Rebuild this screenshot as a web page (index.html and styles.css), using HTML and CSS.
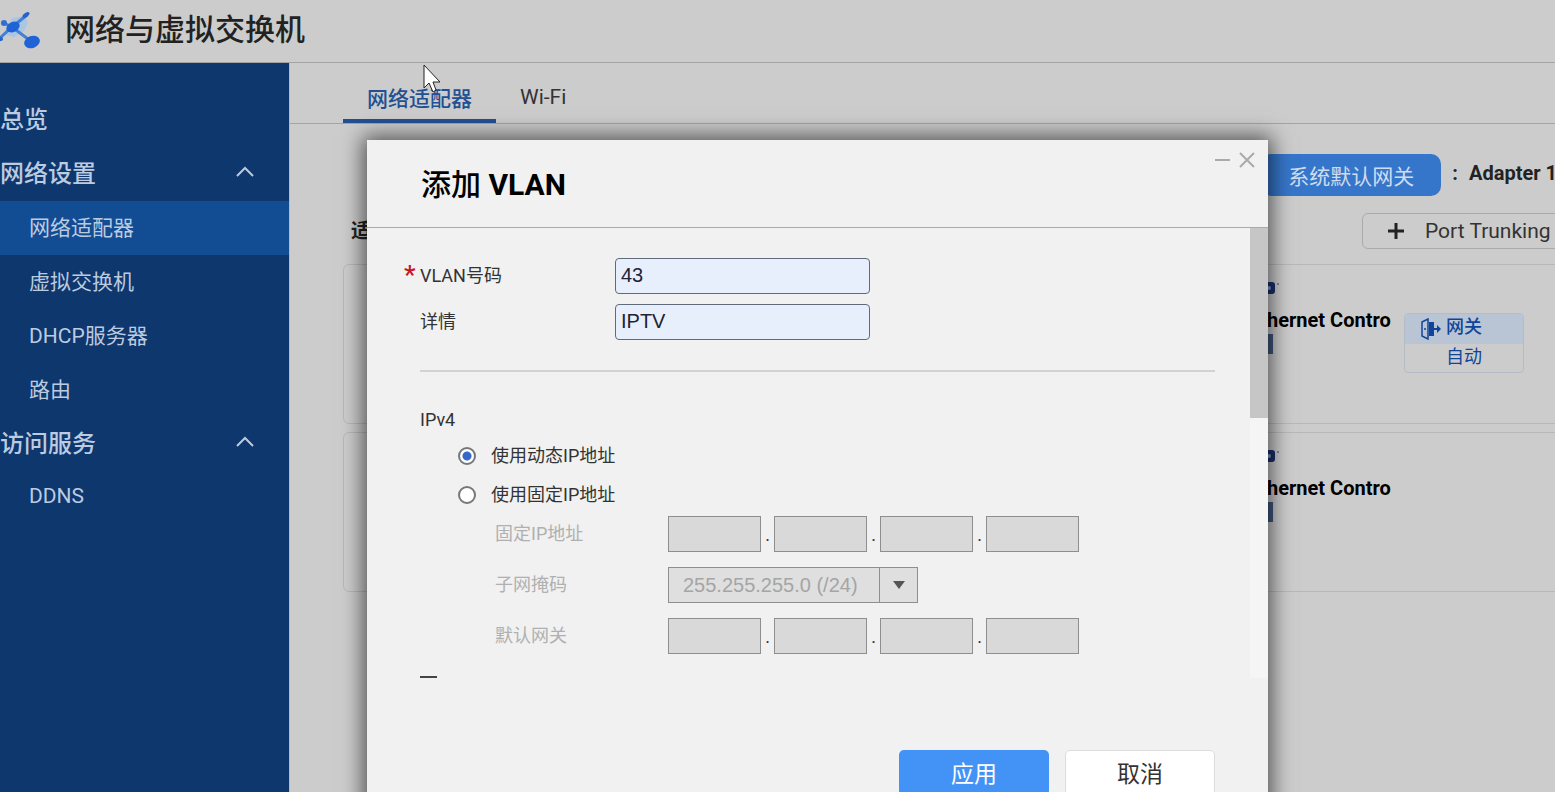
FILE: index.html
```html
<!DOCTYPE html>
<html lang="zh-CN">
  <head>
    <title>网络与虚拟交换机</title>
    <meta charset="UTF-8">
    <meta name="viewport" content="width=device-width, initial-scale=1.0">
    <link rel="stylesheet" href="styles.css">
  </head>
  <body>
    <header class="topbar">
      <svg class="logo" width="42" height="38" viewBox="0 0 42 38">
        <path d="M5 20 L12 7 L25 5 L28 12 L24 20 L14 26 L6 24 Z" fill="#a9c6e2"/>
        <path d="M0 27 L12 16 L27 4 M12 16 L32 31 M12 16 L4 12" fill="none" stroke="#4480d4" stroke-width="3"/>
        <ellipse cx="13" cy="16" rx="7" ry="5" transform="rotate(-25 13 16)" fill="#1f63d6"/>
        <ellipse cx="4" cy="12" rx="3" ry="3" fill="#2f6ed3"/>
        <ellipse cx="26" cy="4" rx="4" ry="2" transform="rotate(-35 26 4)" fill="#2a62c8"/>
        <ellipse cx="32" cy="31" rx="8" ry="6" transform="rotate(-20 32 31)" fill="#1f63d6"/>
        <ellipse cx="0" cy="28" rx="3" ry="2" fill="#1f63d6"/>
      </svg>
      <h1>网络与虚拟交换机</h1>
    </header>

    <div class="layout">
      <nav class="sidebar">
        <a class="group" href="#">总览</a>
        <a class="group" href="#">网络设置
          <svg width="20" height="14" viewBox="0 0 20 14"><path d="M2 12 L10 4 L18 12" fill="none" stroke="#bccbe0" stroke-width="2"/></svg>
        </a>
        <a class="item active" href="#">网络适配器</a>
        <a class="item" href="#">虚拟交换机</a>
        <a class="item" href="#">DHCP服务器</a>
        <a class="item" href="#">路由</a>
        <a class="group" href="#">访问服务
          <svg width="20" height="14" viewBox="0 0 20 14"><path d="M2 12 L10 4 L18 12" fill="none" stroke="#bccbe0" stroke-width="2"/></svg>
        </a>
        <a class="item" href="#">DDNS</a>
      </nav>

      <main>
        <div class="tabs">
          <a class="tab active" href="#">网络适配器</a>
          <a class="tab" href="#">Wi-Fi</a>
        </div>
        <div class="content">
          <div class="gateway-row">
            <button class="gateway-btn" type="button">系统默认网关</button>
            <b>:</b>
            <b>Adapter 1</b>
          </div>
          <div class="title-row">
            <h2>适配器</h2>
            <button class="trunk-btn" type="button">
              <svg width="16" height="16" viewBox="0 0 16 16"><path d="M8 0 V16 M0 8 H16" stroke="#222" stroke-width="3"/></svg>
              Port Trunking
            </button>
          </div>

          <section class="card">
            <div class="adapter">
              <svg width="32" height="14" viewBox="0 0 32 14">
                <rect x="4" y="1" width="22" height="12" rx="3" fill="#1b2f70"/>
                <circle cx="20" cy="7" r="2" fill="#8f9dc0"/>
                <circle cx="29" cy="3" r="1" fill="#69779c"/>
              </svg>
              <h3>Ethernet Contro</h3>
              <span class="port"></span>
            </div>
            <div class="gateway-box">
              <div class="gateway-head">
                <svg width="22" height="22" viewBox="0 0 22 22">
                  <path d="M2 4 L8 1 V21 L2 18 Z" fill="none" stroke="#10459a" stroke-width="1.5"/>
                  <circle cx="5" cy="11" r="1" fill="#10459a"/>
                  <path d="M9 4 H14 V18 H9 Z" fill="#10459a"/>
                  <path d="M14 11 H18" fill="none" stroke="#10459a" stroke-width="2"/>
                  <path d="M17 7 L21 11 L17 15 Z" fill="#10459a"/>
                </svg>
                <span>网关</span>
              </div>
              <div class="gateway-mode">自动</div>
            </div>
          </section>

          <section class="card">
            <div class="adapter">
              <svg width="32" height="14" viewBox="0 0 32 14">
                <rect x="4" y="1" width="22" height="12" rx="3" fill="#1b2f70"/>
                <circle cx="20" cy="7" r="2" fill="#8f9dc0"/>
                <circle cx="29" cy="3" r="1" fill="#69779c"/>
              </svg>
              <h3>Ethernet Contro</h3>
              <span class="port"></span>
            </div>
          </section>
        </div>
      </main>
    </div>

    <div class="dialog" role="dialog" aria-labelledby="dialog-title">
      <div class="dialog-head">
        <h2 id="dialog-title">添加 <b>VLAN</b></h2>
        <div class="window-btns">
          <button type="button" aria-label="最小化">
            <svg width="16" height="16" viewBox="0 0 16 16"><path d="M0 8 H15" stroke="#aaa" stroke-width="2"/></svg>
          </button>
          <button type="button" aria-label="关闭">
            <svg width="16" height="16" viewBox="0 0 16 16"><path d="M1 1 L15 15 M15 1 L1 15" stroke="#aaa" stroke-width="2"/></svg>
          </button>
        </div>
      </div>

      <div class="dialog-body">
        <form id="vlan-form">
          <div class="field">
            <label class="required" for="vlan_id">VLAN号码</label>
            <input type="text" id="vlan_id" name="vlan_id" value="43">
          </div>
          <div class="field">
            <label for="desc">详情</label>
            <input type="text" id="desc" name="desc" value="IPTV">
          </div>
          <hr>
          <p class="section">IPv4</p>
          <div class="choice">
            <input type="radio" id="dhcp" name="ip_mode" checked>
            <label for="dhcp">使用动态IP地址</label>
          </div>
          <div class="choice">
            <input type="radio" id="static" name="ip_mode">
            <label for="static">使用固定IP地址</label>
          </div>

          <div class="sub">
            <label for="ip1">固定IP地址</label>
            <div class="octets">
              <input type="text" id="ip1" disabled><span>.</span>
              <input type="text" aria-label="固定IP地址 2" disabled><span>.</span>
              <input type="text" aria-label="固定IP地址 3" disabled><span>.</span>
              <input type="text" aria-label="固定IP地址 4" disabled>
            </div>
          </div>
          <div class="sub">
            <label for="mask">子网掩码</label>
            <div class="select">
              <select id="mask" disabled>
                <option>255.255.255.0 (/24)</option>
              </select>
              <span class="arrow"></span>
            </div>
          </div>
          <div class="sub">
            <label for="gw1">默认网关</label>
            <div class="octets">
              <input type="text" id="gw1" disabled><span>.</span>
              <input type="text" aria-label="默认网关 2" disabled><span>.</span>
              <input type="text" aria-label="默认网关 3" disabled><span>.</span>
              <input type="text" aria-label="默认网关 4" disabled>
            </div>
          </div>
          <input class="more" type="checkbox" aria-label="更多">
        </form>
        <div class="scrollbar"><div class="thumb"></div></div>
      </div>

      <div class="dialog-foot">
        <button class="apply" type="submit" form="vlan-form">应用</button>
        <button class="cancel" type="button">取消</button>
      </div>
    </div>

    <svg class="cursor" width="20" height="30" viewBox="0 0 20 30">
      <path d="M2 2 V25 L7 20 L11 29 L14 27 L11 19 H18 Z" fill="#fff" stroke="#222" stroke-width="1"/>
    </svg>
  </body>
</html>
```

FILE: styles.css
```css
* {
  box-sizing: border-box;
  margin: 0;
  padding: 0;
}

body {
  display: flex;
  flex-direction: column;
  height: 100vh;
  overflow: hidden;
  font-family: Roboto, "Noto Sans CJK SC", sans-serif;
  font-size: 18px;
  color: #333;
  background-color: #ccc;
}

button, input, select {
  font: inherit;
  color: inherit;
}

a {
  color: inherit;
  text-decoration: none;
}

/* Header */
.topbar {
  display: flex;
  flex: none;
  align-items: center;
  gap: 23px;
  height: 63px;
  padding-bottom: 2px;
  border-bottom: 1px solid #a4a4a4;
}

.topbar h1 {
  font-size: 30px;
  font-weight: 500;
  line-height: 60px;
  color: #222;
}

.layout {
  display: flex;
  flex: 1;
  min-height: 0;
}

/* Sidebar */
.sidebar {
  flex: none;
  width: 289px;
  padding-top: 30px;
  color: #bccbe0;
  background-color: #0e376d;
}

.sidebar a {
  display: flex;
  align-items: center;
  justify-content: space-between;
  height: 54px;
  padding-right: 34px;
}

.sidebar .group {
  padding-bottom: 6px;
  font-size: 24px;
  font-weight: 500;
}

.sidebar .item {
  padding-bottom: 4px;
  padding-left: 29px;
  font-size: 21px;
}

.sidebar .active {
  background-color: #124c92;
}

/* Main area */
main {
  flex: 1;
  min-width: 0;
  border-left: 1px solid #bbb;
}

.tabs {
  display: flex;
  height: 61px;
  padding-left: 53px;
  border-bottom: 1px solid #a4a4a4;
}

.tab {
  padding: 6px 24px 0;
  font-size: 21px;
  line-height: 56px;
}

.tab.active {
  padding-top: 8px;
  font-weight: 500;
  color: #234f93;
  border-bottom: 4px solid #234f93;
}

.content {
  padding: 30px 0 0 53px;
}

.gateway-row {
  display: flex;
  align-items: center;
  justify-content: flex-end;
  gap: 11px;
  margin-right: -2px;
  height: 42px;
  font-size: 20px;
  color: #222;
  white-space: nowrap;
}

.gateway-row b {
  padding-bottom: 4px;
}

.gateway-btn {
  width: 180px;
  height: 42px;
  font-size: 21px;
  color: #cfdcee;
  background-color: #3676ca;
  border: none;
  border-radius: 10px;
}

.title-row {
  display: flex;
  align-items: center;
  justify-content: space-between;
  height: 36px;
  margin: 17px -20px 15px 8px;
}

.title-row h2 {
  padding-bottom: 4px;
  font-size: 20px;
  color: #222;
}

.trunk-btn {
  display: flex;
  align-items: center;
  gap: 21px;
  width: 213px;
  height: 36px;
  padding-left: 25px;
  font-size: 21px;
  white-space: nowrap;
  background: none;
  border: 1px solid #aaa;
  border-radius: 6px;
}

.card {
  display: flex;
  justify-content: flex-end;
  height: 160px;
  margin: 0 -20px 8px 0;
  padding-right: 186px;
  border: 1px solid #b8b8b8;
  border-radius: 6px;
}

.adapter {
  width: 139px;
  padding-top: 16px;
}

.adapter svg, .port {
  display: block;
}

.adapter h3 {
  margin: 13px 0 2px;
  font-size: 20px;
  line-height: 24px;
  color: #000;
  white-space: nowrap;
}

.port {
  width: 24px;
  height: 20px;
  background-color: #435a80;
}

/* Gateway box */
.gateway-box {
  width: 120px;
  height: 60px;
  margin: 48px -136px 0 16px;
  line-height: 26px;
  color: #10459a;
  border: 1px solid #b5bcc6;
  border-radius: 4px;
}

.gateway-head {
  display: flex;
  align-items: center;
  gap: 4px;
  height: 30px;
  padding-left: 15px;
  font-weight: 500;
  background-color: #b9c5d5;
}

.gateway-head span {
  padding-bottom: 4px;
}

.gateway-mode {
  text-align: center;
}

/* Dialog */
.dialog {
  position: absolute;
  top: 140px;
  left: 367px;
  right: 287px;
  background-color: #f1f1f1;
  box-shadow: 0 0 20px 4px rgba(0,0,0,0.6);
}

.dialog-head {
  display: flex;
  justify-content: space-between;
  height: 88px;
  padding: 0 13px 0 54px;
  border-bottom: 1px solid #aaa;
}

.dialog-head h2 {
  font-size: 30px;
  font-weight: 500;
  line-height: 90px;
  color: #000;
}

.window-btns {
  display: flex;
  gap: 8px;
  padding-top: 12px;
}

.window-btns button {
  width: 16px;
  height: 16px;
  background: none;
  border: none;
}

.window-btns svg {
  display: block;
}

.dialog-body {
  display: flex;
  height: 450px;
  overflow: hidden;
}

.dialog-body form {
  flex: 1;
  padding: 30px 35px 0 53px;
}

.scrollbar {
  width: 18px;
  background-color: #f5f5f5;
}

.thumb {
  height: 190px;
  background-color: #c6c6c6;
}

.field {
  display: flex;
  height: 36px;
  margin-bottom: 10px;
}

.field label {
  width: 195px;
  line-height: 35px;
}

.required::before {
  content: "*";
  float: left;
  margin-left: -16px;
  font-size: 26px;
  font-weight: 500;
  color: #c8161d;
}

.field input {
  width: 255px;
  padding: 0 5px 2px;
  font-family: "Liberation Sans", sans-serif;
  font-size: 20px;
  color: #223;
  background-color: #e8effc;
  border: 1px solid #5f6b7d;
  border-radius: 4px;
}

hr {
  margin-top: 30px;
  border: none;
  border-top: 2px solid #d2d2d2;
}

.section {
  margin: 34px 0 10px;
  line-height: 28px;
}

.choice {
  display: flex;
  align-items: center;
  gap: 15px;
  height: 24px;
  margin: 0 0 15px 38px;
}

.choice label {
  padding-bottom: 4px;
}

.choice input {
  appearance: none;
  width: 18px;
  height: 18px;
  background-color: #fff;
  border: 2px solid #777;
  border-radius: 50%;
}

.choice input:checked {
  background-image: radial-gradient(circle, #3568c8 4px, #fff 5px);
}

.sub {
  display: flex;
  height: 36px;
  margin: 0 0 15px 75px;
}

.choice + .sub {
  margin-top: -6px;
}

.sub label {
  width: 173px;
  line-height: 35px;
  color: #b0b0b0;
}

.octets {
  display: flex;
}

.octets input {
  width: 93px;
  background-color: #d9d9d9;
  border: 1px solid #8e8e8e;
}

.octets span {
  width: 13px;
  line-height: 38px;
  text-align: center;
}

.select {
  position: relative;
}

.select select {
  appearance: none;
  width: 250px;
  height: 36px;
  padding-left: 14px;
  font-family: "Liberation Sans", sans-serif;
  font-size: 20px;
  color: #a5a5a5;
  background-color: #dfdfdf;
  border: 1px solid #8e8e8e;
  border-radius: 0;
  opacity: 1;
}

/* Down arrow over the right end of the select */
.arrow {
  position: absolute;
  top: 0;
  right: 0;
  display: flex;
  align-items: center;
  justify-content: center;
  width: 39px;
  height: 36px;
  border-left: 1px solid #8e8e8e;
  pointer-events: none;
}

.arrow::after {
  content: "";
  border: 6px solid transparent;
  border-top: 8px solid #555;
  border-bottom: none;
}

.more {
  appearance: none;
  display: block;
  width: 17px;
  height: 17px;
  margin-top: 22px;
  border: 2px solid #444;
}

.dialog-foot {
  display: flex;
  justify-content: flex-end;
  gap: 16px;
  padding: 72px 53px 40px;
}

.dialog-foot button {
  width: 150px;
  height: 46px;
  padding-bottom: 3px;
  font-size: 23px;
  border-radius: 5px;
}

.apply {
  color: #fff;
  background-color: #4393f7;
  border: none;
}

.cancel {
  background-color: #fff;
  border: 1px solid #ddd;
}

.cursor {
  position: absolute;
  top: 63px;
  left: 422px;
}
```
